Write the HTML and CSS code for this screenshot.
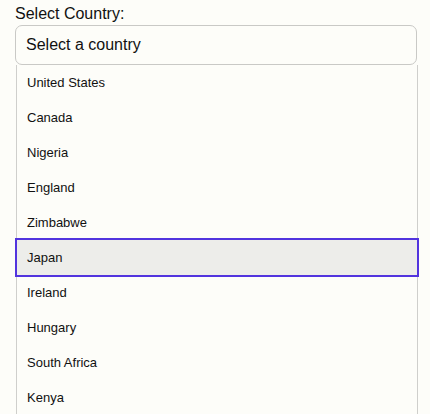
FILE: index.html
```html
<!DOCTYPE html>
<html>
<head>
<meta charset="utf-8">
<link rel="stylesheet" href="styles.css">
</head>
<body>
<div class="wrap">
  <label class="label">Select Country:</label>
  <div class="input">Select a country</div>
  <ul class="list">
    <li class="item">United States</li>
    <li class="item">Canada</li>
    <li class="item">Nigeria</li>
    <li class="item">England</li>
    <li class="item">Zimbabwe</li>
    <li class="item active">Japan</li>
    <li class="item">Ireland</li>
    <li class="item">Hungary</li>
    <li class="item">South Africa</li>
    <li class="item">Kenya</li>
  </ul>
</div>
</body>
</html>
```
FILE: styles.css
```css
html, body {
  margin: 0;
  padding: 0;
  background: #fdfdf9;
  overflow: hidden;
}
.wrap {
  padding: 5px 0 0 15px;
  font-family: "Liberation Sans", Arial, sans-serif;
  color: #111;
}
.label {
  display: block;
  font-size: 16px;
  line-height: 18px;
  margin-bottom: 2px;
}
.input {
  box-sizing: border-box;
  width: 402px;
  height: 40px;
  border: 1px solid #c9c9c6;
  border-radius: 7px;
  padding: 0 10px;
  font-size: 16px;
  line-height: 38px;
}
.list {
  list-style: none;
  margin: 0 0 0 1px;
  padding: 0;
  box-sizing: border-box;
  width: 402px;
  border-left: 1px solid #cfcfcc;
  border-right: 1px solid #cfcfcc;
}
.item {
  height: 35px;
  line-height: 35px;
  padding-left: 10px;
  font-size: 13px;
}
.item.active {
  background: #ededea;
  outline: 2px solid #5234de;
  outline-offset: 0;
  position: relative;
}
```
